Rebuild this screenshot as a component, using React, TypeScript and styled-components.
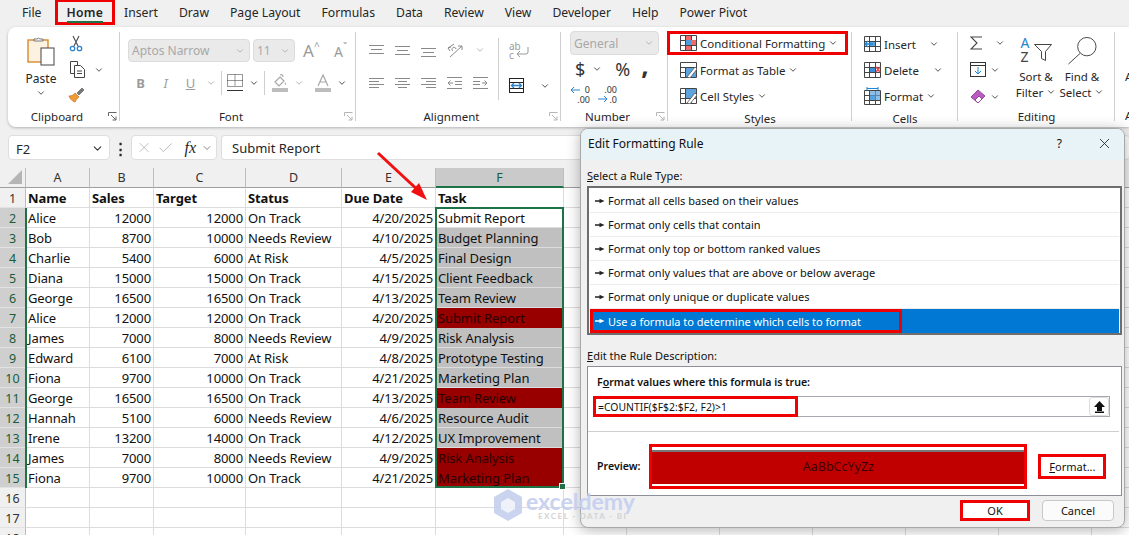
import React from 'react'
import styled, { createGlobalStyle } from 'styled-components'
import { ChevronDown, X, Check } from 'lucide-react'

const UI_FONT = '"Noto Sans", "Open Sans", sans-serif'
const GREEN = '#1f7246'
const RED = '#f00000'

const GlobalStyle = createGlobalStyle`
  html, body { margin: 0; padding: 0; background: #f0f0f0; }
  body { font-family: ${UI_FONT}; color: #262626; }
  * { box-sizing: border-box; }
`

type Row = [string, number, number, string, string, string, '' | 'gray' | 'red']

const sheetRows: Row[] = [
  ['Alice', 12000, 12000, 'On Track', '4/20/2025', 'Submit Report', ''],
  ['Bob', 8700, 10000, 'Needs Review', '4/10/2025', 'Budget Planning', 'gray'],
  ['Charlie', 5400, 6000, 'At Risk', '4/5/2025', 'Final Design', 'gray'],
  ['Diana', 15000, 15000, 'On Track', '4/15/2025', 'Client Feedback', 'gray'],
  ['George', 16500, 16500, 'On Track', '4/13/2025', 'Team Review', 'gray'],
  ['Alice', 12000, 12000, 'On Track', '4/20/2025', 'Submit Report', 'red'],
  ['James', 7000, 8000, 'Needs Review', '4/9/2025', 'Risk Analysis', 'gray'],
  ['Edward', 6100, 7000, 'At Risk', '4/8/2025', 'Prototype Testing', 'gray'],
  ['Fiona', 9700, 10000, 'On Track', '4/21/2025', 'Marketing Plan', 'gray'],
  ['George', 16500, 16500, 'On Track', '4/13/2025', 'Team Review', 'red'],
  ['Hannah', 5100, 6000, 'Needs Review', '4/6/2025', 'Resource Audit', 'gray'],
  ['Irene', 13200, 14000, 'On Track', '4/12/2025', 'UX Improvement', 'gray'],
  ['James', 7000, 8000, 'Needs Review', '4/9/2025', 'Risk Analysis', 'red'],
  ['Fiona', 9700, 10000, 'On Track', '4/21/2025', 'Marketing Plan', 'red'],
]

const menuItems = ['File', 'Home', 'Insert', 'Draw', 'Page Layout', 'Formulas', 'Data', 'Review', 'View', 'Developer', 'Help', 'Power Pivot']
const columnNames = ['A', 'B', 'C', 'D', 'E', 'F', '', '', '', '', '', '', '']
const ruleTypes = [
  'Format all cells based on their values',
  'Format only cells that contain',
  'Format only top or bottom ranked values',
  'Format only values that are above or below average',
  'Format only unique or duplicate values',
  'Use a formula to determine which cells to format',
]

const Chev = ({ size = 10, color = '#333' }: { size?: number; color?: string }) => (
  <ChevronDown size={size} color={color} strokeWidth={2} style={{ flex: 'none' }} />
)

const PasteIcon = () => (
  <svg width="28" height="31" viewBox="0 0 28 31">
    <rect x="1" y="5" width="20" height="22" fill="#fdf1e0" stroke="#d98a2b" strokeWidth="1.4" />
    <path d="M7 6V4h3a2 2 0 0 1 3 0h3v2z" fill="#fff" stroke="#777" />
    <rect x="14" y="13" width="13" height="17" fill="#fff" stroke="#444" />
  </svg>
)
const CutIcon = () => (
  <svg width="14" height="17" viewBox="0 0 14 17">
    <path d="M4 1l5 10M10 1L5 11" stroke="#555" strokeWidth="1.2" fill="none" />
    <circle cx="3.5" cy="13.5" r="2.2" fill="none" stroke="#2a83cc" strokeWidth="1.3" />
    <circle cx="10.5" cy="13.5" r="2.2" fill="none" stroke="#2a83cc" strokeWidth="1.3" />
  </svg>
)
const CopyIcon = () => (
  <svg width="17" height="17" viewBox="0 0 17 17" fill="#fff" stroke="#444">
    <path d="M1.5.5h7v12h-7z" />
    <path d="M5.5 4.5h6l4 4v8h-10z" />
    <path d="M8 10h5M8 12.5h5" />
  </svg>
)
const PainterIcon = () => (
  <svg width="17" height="16" viewBox="0 0 17 16">
    <path d="M1 9c3 0 5-1 6-3l4 4c-2 1-3 3-4 5-3-1-5-3-6-6z" fill="#f19a38" stroke="#c96f12" strokeWidth=".7" />
    <path d="M9 6l5-5 2 2-5 5z" fill="#777" stroke="#555" strokeWidth=".6" />
  </svg>
)
const BorderIcon = () => (
  <svg width="16" height="18" viewBox="0 0 16 18" fill="none" stroke="#333" strokeDasharray="1 1">
    <path d="M.5.5h15v12H.5zM8 .5v12M.5 6.5h15" />
    <path d="M0 16.5h16" strokeDasharray="none" />
  </svg>
)
const FillIcon = () => (
  <svg width="16" height="18" viewBox="0 0 16 18">
    <path d="M3 8l5-5 4 4-5 5zM8 1c2-1 3 0 3 2" fill="none" stroke="#a6a6a6" strokeWidth="1.2" />
    <path d="M13 8c1 1.500 1.500 2.200 1 3-1 0-1.500-1-1-3z" fill="#a6a6a6" />
    <rect y="14" width="16" height="4" fill="#bdbdbd" />
  </svg>
)
const FontColorIcon = () => (
  <svg width="16" height="18" viewBox="0 0 16 18">
    <path d="M3 12L8 1l5 11M5 8h6" fill="none" stroke="#a6a6a6" strokeWidth="1.2" />
    <rect y="14" width="16" height="4" fill="#bdbdbd" />
  </svg>
)
const AlignGlyph = ({ lines }: { lines: [number, number, number][] }) => (
  <svg width="15" height="16" viewBox="0 0 15 16" stroke="#8a8a8a" strokeWidth="1">
    {lines.map(([x1, x2, y]) => (
      <path key={`${y}${x1}`} d={`M${x1} ${y + 0.5}H${x2}`} />
    ))}
  </svg>
)
const IndentGlyph = ({ flip }: { flip?: boolean }) => (
  <svg width="15" height="16" viewBox="0 0 15 16" stroke="#8a8a8a" fill="none" style={flip ? { transform: 'scaleX(-1)' } : undefined}>
    <path d="M0 2.500h15M0 13.500h15M8 6.500h7M8 9.500h7M6 8H1M3.500 5.500L1 8l2.500 2.500" />
  </svg>
)
const OrientIcon = () => (
  <svg width="17" height="16" viewBox="0 0 17 16" fill="none" stroke="#8a8a8a">
    <path d="M1 6l6-4M3 9l-2-3 3-1M6 9a2 2 0 1 1 3-2M3 15L15 4M15 4h-4M15 4v4" />
  </svg>
)
const WrapIcon = () => (
  <WrapBox>
    <span>ab</span>
    <span>c</span>
    <svg width="14" height="12" viewBox="0 0 14 12" fill="none" stroke="#999">
      <path d="M13 0v5a2 2 0 0 1-2 2H2M5 4L2 7l3 3" />
    </svg>
  </WrapBox>
)
const MergeIcon = () => (
  <svg width="15" height="15" viewBox="0 0 15 15" fill="#fff" stroke="#2a83cc">
    <rect x=".5" y=".5" width="14" height="14" stroke="#222" />
    <path d="M.5 4.500h14M.5 10.500h14" stroke="#222" />
    <path d="M2.500 7.500h10M5 5l-2.500 2.500L5 10M10 5l2.500 2.500L10 10" fill="none" strokeWidth="1.300" />
  </svg>
)
const DecimalIcon = ({ more }: { more?: boolean }) => (
  <DecimalBox $more={more}>
    <span>{more ? '.00' : '0'}</span>
    <span>{more ? '.0' : '.00'}</span>
    <svg width="10" height="8" viewBox="0 0 10 8" fill="none" stroke="#2a83cc">
      {more ? <path d="M0 4h9M6 1l3 3-3 3" /> : <path d="M10 4H1M4 1L1 4l3 3" />}
    </svg>
  </DecimalBox>
)
const SheetGlyph = ({ children }: { children?: React.ReactNode }) => (
  <svg width="17" height="16" viewBox="0 0 17 16" style={{ flex: 'none' }}>
    <path d="M.5.5h16v15H.5zM.5 5.500h16M.5 10.500h16M5.500.5v15M11.500.5v15" fill="#fff" stroke="#444" />
    {children}
  </svg>
)
const CondFormatIcon = () => (
  <SheetGlyph>
    <rect x="6" y="1" width="5" height="4" fill="#f06a6a" />
    <rect x="11" y="5" width="5" height="5" fill="#f06a6a" />
    <rect x="6" y="11" width="5" height="4" fill="#f06a6a" />
    <rect x="6" y="5" width="5" height="5" fill="#4f9ddb" />
  </SheetGlyph>
)
const BrushOver = () => <path d="M7 15l8-10 2 2-7 9z" fill="#fff" stroke="#555" strokeWidth=".8" />
const TableIcon = () => (
  <SheetGlyph>
    <rect x="1" y="1" width="15" height="4" fill="#fff" />
    <rect x="6" y="6" width="10" height="9" fill="#5ba3dd" />
    <BrushOver />
  </SheetGlyph>
)
const CellStyleIcon = () => (
  <SheetGlyph>
    <rect x="6" y="1" width="10" height="9" fill="#5ba3dd" />
    <BrushOver />
  </SheetGlyph>
)
const InsertIcon = () => (
  <SheetGlyph>
    <rect x="6" y="6" width="5" height="4" fill="#5ba3dd" />
    <path d="M9 8H1M4 5L1 8l3 3" stroke="#1f86d6" strokeWidth="1.300" fill="#fff" />
  </SheetGlyph>
)
const DeleteIcon = () => (
  <SheetGlyph>
    <rect x="6" y="6" width="5" height="4" fill="#3a8fd6" />
    <path d="M12 5l4 5M16 5l-4 5" stroke="#e5484d" strokeWidth="1.500" />
  </SheetGlyph>
)
const FormatIcon = () => (
  <svg width="17" height="18" viewBox="0 0 17 18" style={{ flex: 'none' }}>
    <path d="M.5 3.500h16v14H.5zM.5 8.500h16M.5 13.500h16M5.500 3.500v14M11.500 3.500v14" fill="#fff" stroke="#444" />
    <rect x="6" y="9" width="5" height="4" fill="#5ba3dd" />
    <rect x="6" y="4" width="10" height="9" fill="#5ba3dd" opacity=".7" />
    <path d="M3 1.500h11M3 0v3M14 0v3" stroke="#1f86d6" />
  </svg>
)
const SumIcon = () => (
  <svg width="13" height="14" viewBox="0 0 13 14" fill="none" stroke="#444" strokeWidth="1.100">
    <path d="M12 1H1l6 6-6 6h11" />
  </svg>
)
const DownFillIcon = () => (
  <svg width="16" height="15" viewBox="0 0 16 15" fill="#fff" stroke="#333">
    <rect x=".5" y=".5" width="15" height="14" />
    <path d="M.5 3.500h15" />
    <path d="M8 5v7M5 9l3 3 3-3" stroke="#1f86d6" fill="none" />
  </svg>
)
const EraserIcon = () => (
  <svg width="16" height="15" viewBox="0 0 16 15">
    <path d="M1 8l7-7 7 6-7 7z" fill="#b85cc0" stroke="#964a9e" />
    <path d="M5 11l4-4 3 3-4 4z" fill="#fff" stroke="#964a9e" />
  </svg>
)
const SortIcon = () => (
  <SortBox>
    <span>A</span>
    <span>Z</span>
    <svg width="18" height="17" viewBox="0 0 18 17" fill="#fff" stroke="#444">
      <path d="M.5.5h17l-6 7v9l-4-2v-7z" />
    </svg>
  </SortBox>
)
const FindIcon = () => (
  <svg width="31" height="29" viewBox="0 0 31 30" fill="none" stroke="#444">
    <circle cx="20" cy="11" r="9.500" />
    <path d="M13 18L1 29" />
  </svg>
)
const Launcher = ({ color = '#b5b5b5' }: { color?: string }) => (
  <LauncherBox>
    <svg width="9" height="9" viewBox="0 0 9 9" fill="none" stroke={color}>
      <path d="M.5 4V.5H8.500M3 3l5 5M8 4.500V8H4.500" />
    </svg>
  </LauncherBox>
)
const RuleArrow = ({ light }: { light?: boolean }) => (
  <svg width="10" height="6" viewBox="0 0 10 6" fill={light ? '#fff' : '#222'} style={{ flex: 'none' }}>
    <path d="M0 2.300h4.500V.8L9.500 3l-5 2.200V3.700H0z" />
  </svg>
)

export default function App() {
  return (
    <Page>
      <GlobalStyle />
      <MenuBar>
        {menuItems.map((item) => (
          <MenuItem key={item} $active={item === 'Home'}>
            {item}
          </MenuItem>
        ))}
      </MenuBar>

      <Ribbon>
        <Group $width={112}>
          <Body>
            <PasteCol>
              <PasteIcon />
              <TallLabel>Paste</TallLabel>
              <Chev />
            </PasteCol>
            <SmallCol>
              <CutIcon />
              <IconLine $gap={8}>
                <CopyIcon />
                <Chev />
              </IconLine>
              <PainterIcon />
            </SmallCol>
          </Body>
          <GroupLabel $launcher>Clipboard</GroupLabel>
          <Launcher color="#666" />
        </Group>

        <Group $width={236}>
          <FontBody>
            <IconLine $gap={3}>
              <Combo $width={122}>
                Aptos Narrow
                <Chev color="#aaa" />
              </Combo>
              <Combo $width={42}>
                11
                <Chev color="#aaa" />
              </Combo>
              <GrowA>A<sup>^</sup></GrowA>
              <ShrinkA>A<sup>ˇ</sup></ShrinkA>
            </IconLine>
            <FontRow>
              <StyleLetter $bold>B</StyleLetter>
              <StyleLetter $italic>I</StyleLetter>
              <StyleLetter $under>U</StyleLetter>
              <Chev color="#aaa" />
              <VRule />
              <BorderIcon />
              <Chev />
              <VRule />
              <IconSlot $ml={2}><FillIcon /></IconSlot>
              <Chev color="#aaa" />
              <IconSlot $ml={5}><FontColorIcon /></IconSlot>
              <Chev />
            </FontRow>
          </FontBody>
          <GroupLabel $launcher>Font</GroupLabel>
          <Launcher />
        </Group>

        <Group $width={205}>
          <AlignBody>
            <AlignGrid>
              <AlignRow>
                <AlignGlyph lines={[[0, 15, 3], [2, 13, 7], [0, 15, 11]]} />
                <AlignGlyph lines={[[0, 15, 4], [2, 13, 8], [0, 15, 12]]} />
                <AlignGlyph lines={[[0, 15, 6], [2, 13, 10], [0, 15, 14]]} />
                <OrientIcon />
                <Chev color="#aaa" />
              </AlignRow>
              <AlignRow>
                <AlignGlyph lines={[[0, 15, 3], [0, 10, 6], [0, 15, 9], [0, 10, 12]]} />
                <AlignGlyph lines={[[0, 15, 3], [3, 12, 6], [0, 15, 9], [3, 12, 12]]} />
                <AlignGlyph lines={[[0, 15, 3], [5, 15, 6], [0, 15, 9], [5, 15, 12]]} />
                <IndentGlyph />
                <IndentGlyph flip />
              </AlignRow>
            </AlignGrid>
            <AlignRule />
            <WrapCol>
              <WrapIcon />
              <IconLine $gap={16}>
                <MergeIcon />
                <Chev />
              </IconLine>
            </WrapCol>
          </AlignBody>
          <GroupLabel $launcher>Alignment</GroupLabel>
          <Launcher />
        </Group>

        <Group $width={107}>
          <NumberBody>
            <Combo $width={89} $tall>
              General
              <Chev color="#aaa" />
            </Combo>
            <NumberRow>
              <BigSymbol $ml={5}>$</BigSymbol>
              <Chev />
              <BigSymbol $ml={6}>%</BigSymbol>
              <CommaMark>,</CommaMark>
            </NumberRow>
            <DecimalRow>
              <DecimalIcon />
              <DecimalIcon more />
            </DecimalRow>
          </NumberBody>
          <GroupLabel $launcher>Number</GroupLabel>
          <Launcher />
        </Group>

        <Group $width={184}>
          <ListBody>
            <CommandRow $marked>
              <CondFormatIcon />
              Conditional Formatting
              <Chev />
            </CommandRow>
            <CommandRow>
              <TableIcon />
              Format as Table
              <Chev />
            </CommandRow>
            <CommandRow>
              <CellStyleIcon />
              Cell Styles
              <Chev />
            </CommandRow>
          </ListBody>
          <GroupLabel>Styles</GroupLabel>
        </Group>

        <Group $width={106}>
          <ListBody>
            <CommandRow>
              <InsertIcon />
              Insert
              <ChevSlot $mr={19}><Chev /></ChevSlot>
            </CommandRow>
            <CommandRow>
              <DeleteIcon />
              Delete
              <ChevSlot $mr={15}><Chev /></ChevSlot>
            </CommandRow>
            <CommandRow>
              <FormatIcon />
              Format
              <Chev />
            </CommandRow>
          </ListBody>
          <GroupLabel>Cells</GroupLabel>
        </Group>

        <Group $width={157}>
          <EditBody>
            <EditCol>
              <IconLine $gap={12}><SumIcon /><Chev /></IconLine>
              <IconLine $gap={4}><DownFillIcon /><Chev /></IconLine>
              <IconLine $gap={4}><EraserIcon /><Chev /></IconLine>
            </EditCol>
            <BigCommand>
              <SortIcon />
              <span>Sort &amp;</span>
              <span>Filter <Chev /></span>
            </BigCommand>
            <BigCommand>
              <FindIcon />
              <span>Find &amp;</span>
              <span>Select <Chev /></span>
            </BigCommand>
          </EditBody>
          <GroupLabel>Editing</GroupLabel>
        </Group>

        <ClippedGroup>
          <span>Add-ins</span>
          <span>Add-ins</span>
        </ClippedGroup>
      </Ribbon>

      <FormulaRow>
        <NameBox>
          F2
          <Chev size={13} />
        </NameBox>
        <Dots>⋮</Dots>
        <FxBox>
          <X size={17} color="#aaa" strokeWidth={1.1} />
          <Check size={18} color="#aaa" strokeWidth={1.1} />
          <FxLabel>fx</FxLabel>
          <Chev size={12} color="#888" />
        </FxBox>
        <FormulaInput>Submit Report</FormulaInput>
      </FormulaRow>

      <Sheet>
        <Corner>
          <svg width="14" height="14" viewBox="0 0 14 14">
            <path d="M14 0v14H0z" fill="#b5b5b5" />
          </svg>
        </Corner>
        {columnNames.map((name, i) => (
          <ColHead key={i} $selected={name === 'F'}>
            {name}
          </ColHead>
        ))}

        <RowHead>1</RowHead>
        <HeadCell>Name</HeadCell>
        <HeadCell>Sales</HeadCell>
        <HeadCell>Target</HeadCell>
        <HeadCell>Status</HeadCell>
        <HeadCell>Due Date</HeadCell>
        <HeadCell>Task</HeadCell>
        {Array.from({ length: 7 }, (_, i) => <Cell key={i} />)}

        {sheetRows.map((row, i) => (
          <React.Fragment key={i}>
            <RowHead $selected>{i + 2}</RowHead>
            <Cell>{row[0]}</Cell>
            <Cell $right>{row[1]}</Cell>
            <Cell $right>{row[2]}</Cell>
            <Cell>{row[3]}</Cell>
            <Cell $right>{row[4]}</Cell>
            <Cell $fill={row[6]}>{row[5]}</Cell>
            {Array.from({ length: 7 }, (_, j) => <Cell key={j} />)}
          </React.Fragment>
        ))}

        {[16, 17, 18].map((n) => (
          <React.Fragment key={n}>
            <RowHead>{n}</RowHead>
            {Array.from({ length: 13 }, (_, j) => <Cell key={j} />)}
          </React.Fragment>
        ))}

        <RowMarker />
        <Selection>
          <FillHandle />
        </Selection>
      </Sheet>

      <Arrow width="60" height="56" viewBox="0 0 60 56">
        <path d="M3 2L46 42" stroke="#f01010" strokeWidth="3" />
        <path d="M52 49L36 41l8-9z" fill="#f01010" />
      </Arrow>

      <Dialog>
        <TitleBar>
          Edit Formatting Rule
          <TitleActions>
            <span>?</span>
            <X size={17} strokeWidth={1.2} color="#222" />
          </TitleActions>
        </TitleBar>
        <DialogBody>
          <FieldLabel><u>S</u>elect a Rule Type:</FieldLabel>
          <RuleList>
            {ruleTypes.map((rule, i) => (
              <RuleItem key={rule} $selected={i === 5}>
                <RuleArrow light={i === 5} />
                {rule}
                {i === 5 && <RuleMark />}
              </RuleItem>
            ))}
          </RuleList>
          <DescLabel><u>E</u>dit the Rule Description:</DescLabel>
          <DescBox>
            <BoldLabel>F<u>o</u>rmat values where this formula is true:</BoldLabel>
            <FormulaField>
              =COUNTIF($F$2:$F2, F2)&gt;1
              <FormulaMark />
              <RefButton>
                <svg width="11" height="12" viewBox="0 0 11 12" fill="#111">
                  <path d="M5.500 0L11 6H8v4H3V6H0zM1 10.500h9V12H1z" />
                </svg>
              </RefButton>
            </FormulaField>
            <Divider />
            <PreviewRow>
              <BoldLabel>Preview:</BoldLabel>
              <Swatch>AaBbCcYyZz</Swatch>
              <FormatButton><u>F</u>ormat...</FormatButton>
            </PreviewRow>
          </DescBox>
          <Footer>
            <OkButton>OK</OkButton>
            <CancelButton>Cancel</CancelButton>
          </Footer>
        </DialogBody>
      </Dialog>

      <Watermark>
        <svg width="30" height="32" viewBox="0 0 30 32">
          <path d="M15 0l14 8v16l-14 8-14-8V8z" fill="#c6d0ee" />
          <path d="M15 9l7 4v7l-7 4-7-4v-7z" fill="#eef1fb" />
        </svg>
        <WatermarkText>
          <strong>exceldemy</strong>
          <small>EXCEL · DATA · BI</small>
        </WatermarkText>
      </Watermark>
    </Page>
  )
}

const Page = styled.div`
  position: relative;
  width: 1129px;
  height: 535px;
  overflow: hidden;
  background: #f0f0f0;
  display: flex;
  flex-direction: column;
`

const MenuBar = styled.div`
  display: flex;
  align-items: center;
  height: 27px;
  padding: 0 0 3px 22px;
  gap: 21px;
  font-size: 12.2px;
  flex: none;
`

const MenuItem = styled.div<{ $active?: boolean }>`
  position: relative;
  font-weight: ${(p) => (p.$active ? 600 : 400)};
  ${(p) =>
    p.$active &&
    `
    margin-left: 4px;
    letter-spacing: 0.25px;
    &::before {
      content: '';
      position: absolute;
      inset: -5px -12px -4px -12px;
      border: 3px solid ${RED};
    }
    &::after {
      content: '';
      position: absolute;
      left: 0;
      right: 0;
      bottom: -2px;
      height: 2px;
      background: ${GREEN};
    }
  `}
`

const Ribbon = styled.div`
  display: flex;
  flex: none;
  height: 100px;
  margin-left: 8px;
  background: #fff;
  border-radius: 8px 0 0 8px;
  box-shadow: 0 1px 3px rgba(0, 0, 0, 0.25);
  font-size: 11.5px;
`

const Group = styled.div<{ $width: number }>`
  position: relative;
  display: flex;
  flex-direction: column;
  flex: none;
  width: ${(p) => p.$width}px;
  &::after {
    content: '';
    position: absolute;
    right: 0;
    top: 5px;
    bottom: 6px;
    width: 1px;
    background: #cfcfcf;
  }
`

const Body = styled.div`
  flex: 1;
  display: flex;
  padding: 8px 0 0 6px;
`

const GroupLabel = styled.div<{ $launcher?: boolean }>`
  height: 20px;
  line-height: 20px;
  text-align: center;
  padding-right: ${(p) => (p.$launcher ? 14 : 0)}px;
  font-size: 11.5px;
`

const LauncherBox = styled.div`
  position: absolute;
  right: 3px;
  bottom: 6px;
  display: flex;
`

const PasteCol = styled.div`
  width: 54px;
  display: flex;
  flex-direction: column;
  align-items: center;
`

const TallLabel = styled.div`
  margin-top: 4px;
  line-height: 18px;
  font-size: 12px;
`

const SmallCol = styled.div`
  display: flex;
  flex-direction: column;
  gap: 9px;
  align-items: flex-start;
  svg:first-child {
    margin-left: 1px;
  }
`

const IconLine = styled.div<{ $gap?: number }>`
  display: flex;
  align-items: center;
  gap: ${(p) => p.$gap ?? 10}px;
`

const IconSlot = styled.span<{ $ml: number }>`
  display: flex;
  margin-left: ${(p) => p.$ml}px;
`

const FontBody = styled.div`
  flex: 1;
  display: flex;
  flex-direction: column;
  padding: 12px 0 0 8px;
`

const Combo = styled.div<{ $width: number; $tall?: boolean }>`
  display: flex;
  align-items: center;
  justify-content: space-between;
  flex: none;
  width: ${(p) => p.$width}px;
  height: ${(p) => (p.$tall ? 24 : 23)}px;
  padding: 0 4px 0 3px;
  background: #eaeaea;
  border: 1px solid #dcdcdc;
  border-radius: 4px;
  color: #a8a8a8;
  font-size: 12px;
`

const GrowA = styled.div`
  margin-left: 5px;
  width: 26px;
  font-size: 17px;
  color: #9a9a9a;
  sup {
    font-size: 10px;
  }
`

const ShrinkA = styled.div`
  margin-left: 2px;
  font-size: 14px;
  color: #9a9a9a;
  sup {
    font-size: 10px;
  }
`

const FontRow = styled.div`
  display: flex;
  align-items: center;
  gap: 6px;
  margin-top: 9px;
  padding-left: 3px;
`

const StyleLetter = styled.span<{ $bold?: boolean; $italic?: boolean; $under?: boolean }>`
  width: 19px;
  text-align: center;
  font-size: 13px;
  color: #9c9c9c;
  font-weight: ${(p) => (p.$bold ? 700 : 400)};
  font-style: ${(p) => (p.$italic ? 'italic' : 'normal')};
  text-decoration: ${(p) => (p.$under ? 'underline' : 'none')};
`

const VRule = styled.span`
  width: 1px;
  height: 24px;
  background: #cfcfcf;
  margin: 0 -1px;
`

const AlignBody = styled.div`
  flex: 1;
  display: flex;
  padding: 11px 0 0 13px;
`

const AlignGrid = styled.div`
  display: flex;
  flex-direction: column;
  gap: 17px;
  margin-top: 4px;
  width: 129px;
`

const AlignRow = styled.div`
  display: flex;
  align-items: center;
  gap: 11px;
`

const AlignRule = styled.div`
  width: 1px;
  height: 62px;
  background: #cfcfcf;
`

const WrapCol = styled.div`
  display: flex;
  flex-direction: column;
  gap: 16px;
  padding: 4px 0 0 10px;
`

const WrapBox = styled.div`
  position: relative;
  width: 20px;
  height: 20px;
  display: flex;
  flex-direction: column;
  font-size: 10px;
  line-height: 9px;
  color: #999;
  svg {
    position: absolute;
    left: 6px;
    top: 5px;
  }
`

const NumberBody = styled.div`
  flex: 1;
  display: flex;
  flex-direction: column;
  padding: 4px 0 0 9px;
`

const NumberRow = styled.div`
  display: flex;
  align-items: center;
  gap: 7px;
  height: 28px;
`

const DecimalRow = styled.div`
  display: flex;
  gap: 7px;
  margin-top: 2px;
`

const DecimalBox = styled.div<{ $more?: boolean }>`
  position: relative;
  width: 20px;
  height: 20px;
  display: flex;
  flex-direction: column;
  align-items: flex-end;
  font-size: 9px;
  line-height: 10px;
  color: #333;
  svg {
    position: absolute;
    left: ${(p) => (p.$more ? 1 : 0)}px;
    top: ${(p) => (p.$more ? 10 : 1)}px;
  }
`

const BigSymbol = styled.span<{ $ml: number }>`
  margin-left: ${(p) => p.$ml}px;
  font-size: 18px;
  color: #333;
`

const CommaMark = styled.span`
  margin: -8px 0 0 4px;
  font-size: 26px;
  font-weight: 700;
  line-height: 1;
  color: #333;
`

const ListBody = styled.div`
  flex: 1;
  display: flex;
  flex-direction: column;
  padding: 4px 0 0 4px;
`

const CommandRow = styled.div<{ $marked?: boolean }>`
  display: flex;
  align-items: center;
  gap: 3px;
  flex: none;
  height: 26px;
  padding-left: 8px;
  white-space: nowrap;
  ${(p) =>
    p.$marked &&
    `
    height: 24px;
    margin: 0 0 2px -5px;
    padding-left: 10px;
    width: 181px;
    border: 3px solid ${RED};
  `}
`

const ChevSlot = styled.span<{ $mr: number }>`
  margin-left: auto;
  margin-right: ${(p) => p.$mr}px;
  display: flex;
`

const EditBody = styled.div`
  flex: 1;
  display: flex;
  padding: 9px 0 0 12px;
`

const EditCol = styled.div`
  display: flex;
  flex-direction: column;
  gap: 12px;
  width: 43px;
`

const BigCommand = styled.div`
  display: flex;
  flex-direction: column;
  align-items: center;
  width: 46px;
  line-height: 16px;
  white-space: nowrap;
  & > svg:first-child,
  & > div:first-child {
    margin-bottom: 4px;
  }
`

const SortBox = styled.div`
  position: relative;
  width: 31px;
  height: 29px;
  display: flex;
  flex-direction: column;
  font-size: 14px;
  line-height: 14px;
  color: #444;
  span:first-child {
    color: #2a83cc;
  }
  svg {
    position: absolute;
    left: 13px;
    top: 8px;
  }
`

const ClippedGroup = styled.div`
  flex: 1;
  min-width: 0;
  overflow: hidden;
  padding: 42px 0 0 10px;
  white-space: nowrap;
  display: flex;
  flex-direction: column;
  gap: 24px;
`

const FormulaRow = styled.div`
  display: flex;
  align-items: stretch;
  flex: none;
  height: 25px;
  margin: 8px 0;
  padding: 1px 0 0 8px;
  font-size: 13px;
`

const whiteBox = `
  background: #fff;
  border: 1px solid #dedede;
  border-radius: 4px;
  margin-top: -1px;
`

const NameBox = styled.div`
  ${whiteBox}
  width: 102px;
  display: flex;
  align-items: center;
  justify-content: space-between;
  padding: 2px 5px 0 7px;
`

const Dots = styled.div`
  width: 21px;
  text-align: center;
  line-height: 24px;
  font-size: 15px;
  font-weight: 700;
`

const FxBox = styled.div`
  ${whiteBox}
  width: 86px;
  display: flex;
  align-items: center;
  gap: 5px;
  padding: 0 3px 0 4px;
`

const FxLabel = styled.i`
  font-family: 'Liberation Serif', serif;
  font-size: 16px;
  margin-left: 5px;
`

const FormulaInput = styled.div`
  ${whiteBox}
  flex: 1;
  margin-left: 4px;
  border-right: 0;
  padding-left: 10px;
  line-height: 25px;
`

const Sheet = styled.div`
  position: relative;
  flex: none;
  display: grid;
  grid-template-columns: 26px 64px 64px 92px 96px 94px 128px 63px repeat(6, 93px);
  grid-auto-rows: 20px;
  background: #fff;
  font-size: 13px;
  color: #111;
`

const Corner = styled.div`
  display: flex;
  align-items: flex-end;
  justify-content: flex-end;
  padding: 0 3px 3px 0;
  background: #f0f0f0;
  border-right: 1px solid #bdbdbd;
  border-bottom: 1px solid #9e9e9e;
`

const ColHead = styled.div<{ $selected?: boolean }>`
  text-align: center;
  line-height: 19px;
  font-size: 12.5px;
  background: ${(p) => (p.$selected ? '#cacaca' : '#f0f0f0')};
  color: ${(p) => (p.$selected ? '#1a5c3a' : '#333')};
  border-right: 1px solid #bdbdbd;
  border-bottom: ${(p) => (p.$selected ? `2px solid ${GREEN}` : '1px solid #9e9e9e')};
`

const RowHead = styled.div<{ $selected?: boolean }>`
  text-align: center;
  line-height: 21px;
  font-size: 12.5px;
  background: ${(p) => (p.$selected ? '#cfcfcf' : '#f0f0f0')};
  color: ${(p) => (p.$selected ? '#1a5c3a' : '#333')};
  border-right: 1px solid #bdbdbd;
  border-bottom: 1px solid #e2e2e2;
`

const fills = { gray: '#c0c0c0', red: '#980000', '': 'transparent' }

const Cell = styled.div<{ $right?: boolean; $fill?: '' | 'gray' | 'red' }>`
  padding: 0 2px;
  line-height: 21px;
  letter-spacing: -0.1px;
  white-space: nowrap;
  overflow: hidden;
  text-align: ${(p) => (p.$right ? 'right' : 'left')};
  background: ${(p) => fills[p.$fill ?? '']};
  color: ${(p) => (p.$fill === 'red' ? '#2a0000' : '#111')};
  border-right: 1px solid #dcdcdc;
  border-bottom: 1px solid ${(p) => (p.$fill === 'red' ? '#980000' : '#dcdcdc')};
`

const HeadCell = styled(Cell)`
  font-weight: 700;
`

const RowMarker = styled.div`
  position: absolute;
  left: 25px;
  top: 40px;
  width: 2px;
  height: 280px;
  background: ${GREEN};
`

const Selection = styled.div`
  position: absolute;
  left: 435px;
  top: 39px;
  width: 129px;
  height: 281px;
  border: 2px solid ${GREEN};
`

const FillHandle = styled.div`
  position: absolute;
  right: -4px;
  bottom: -4px;
  width: 7px;
  height: 7px;
  background: ${GREEN};
  border: 1px solid #fff;
`

const Arrow = styled.svg`
  position: absolute;
  left: 375px;
  top: 151px;
`

const Dialog = styled.div`
  position: absolute;
  left: 580px;
  top: 128px;
  width: 545px;
  height: 400px;
  display: flex;
  flex-direction: column;
  background: #f0f0f0;
  border: 1px solid #a8a8a8;
  border-radius: 8px;
  box-shadow: 0 2px 14px rgba(0, 0, 0, 0.3);
  overflow: hidden;
  font-size: 11px;
  color: #111;
`

const TitleBar = styled.div`
  display: flex;
  align-items: center;
  justify-content: space-between;
  flex: none;
  height: 31px;
  padding: 0 11px 2px 7px;
  background: #e8f3f8;
  font-size: 12px;
`

const TitleActions = styled.div`
  display: flex;
  align-items: center;
  gap: 34px;
`

const DialogBody = styled.div`
  flex: 1;
  display: flex;
  flex-direction: column;
  padding: 8px 2px 0 6px;
`

const FieldLabel = styled.div`
  height: 18px;
  line-height: 16px;
`

const RuleList = styled.div`
  position: relative;
  height: 149px;
  padding: 1px;
  background: #fff;
  border: 2px solid #6e6e6e;
`

const RuleItem = styled.div<{ $selected?: boolean }>`
  position: relative;
  display: flex;
  align-items: center;
  gap: 3px;
  height: 24px;
  padding: 0 0 0 5px;
  background: ${(p) => (p.$selected ? '#0078d4' : '#fff')};
  color: ${(p) => (p.$selected ? '#fff' : '#111')};
  border-bottom: ${(p) => (p.$selected ? 0 : '1px solid #ececec')};
`

const RuleMark = styled.span`
  position: absolute;
  left: 0;
  top: 0;
  width: 312px;
  height: 24px;
  border: 3px solid ${RED};
`

const DescLabel = styled.div`
  margin-top: 13px;
  height: 18px;
  line-height: 16px;
`

const DescBox = styled.div`
  height: 130px;
  background: #fff;
  border: 1px solid #8f8f9c;
  padding: 7px 2px 0 9px;
  display: flex;
  flex-direction: column;
`

const BoldLabel = styled.div`
  font-weight: 600;
  font-size: 10.6px;
  line-height: 16px;
`

const FormulaField = styled.div`
  position: relative;
  display: flex;
  align-items: center;
  justify-content: space-between;
  height: 21px;
  margin: 6px 9px 0 -3px;
  padding-left: 3px;
  border: 1px solid #a8a8b0;
  font-size: 10.4px;
`

const FormulaMark = styled.span`
  position: absolute;
  left: -2px;
  top: -1px;
  width: 205px;
  height: 21px;
  border: 3px solid ${RED};
`

const RefButton = styled.div`
  display: flex;
  align-items: center;
  justify-content: center;
  width: 20px;
  height: 19px;
  background: #fff;
  border: 1px solid #ddd;
  border-radius: 3px;
`

const Divider = styled.div`
  height: 1px;
  margin: 14px 0 0 -9px;
  background: #cfcfcf;
`

const PreviewRow = styled.div`
  display: flex;
  align-items: center;
  flex: 1;
  padding-top: 5px;
`

const Swatch = styled.div`
  width: 378px;
  height: 45px;
  margin-left: 9px;
  display: flex;
  align-items: center;
  justify-content: center;
  background: #c00000;
  color: #3a0000;
  font-size: 12.5px;
  border: 3px solid ${RED};
  box-shadow: inset 0 3px 0 #fff, inset 0 5px 0 #777, inset 0 -2px 0 #fff;
`

const FormatButton = styled.div`
  width: 68px;
  height: 25px;
  margin-left: 11px;
  line-height: 19px;
  text-align: center;
  border: 3px solid ${RED};
  background: #fff;
`

const Footer = styled.div`
  display: flex;
  justify-content: flex-end;
  gap: 12px;
  padding: 4px 8px 0 0;
`

const OkButton = styled.div`
  width: 70px;
  height: 21px;
  line-height: 15px;
  text-align: center;
  background: #fff;
  border: 3px solid ${RED};
`

const CancelButton = styled.div`
  width: 72px;
  height: 21px;
  line-height: 19px;
  text-align: center;
  background: #fbfbfb;
  border: 1px solid #c8c8c8;
  border-radius: 4px;
`

const Watermark = styled.div`
  position: absolute;
  left: 493px;
  top: 489px;
  display: flex;
  align-items: center;
  gap: 3px;
  opacity: 0.9;
`

const WatermarkText = styled.div`
  display: flex;
  flex-direction: column;
  font-family: 'Lato', sans-serif;
  strong {
    font-size: 23px;
    line-height: 22px;
    color: #c4cff0;
  }
  small {
    font-size: 8px;
    line-height: 9px;
    letter-spacing: 1.5px;
    padding-left: 12px;
    color: #cfcfcf;
    font-weight: 700;
  }
`
